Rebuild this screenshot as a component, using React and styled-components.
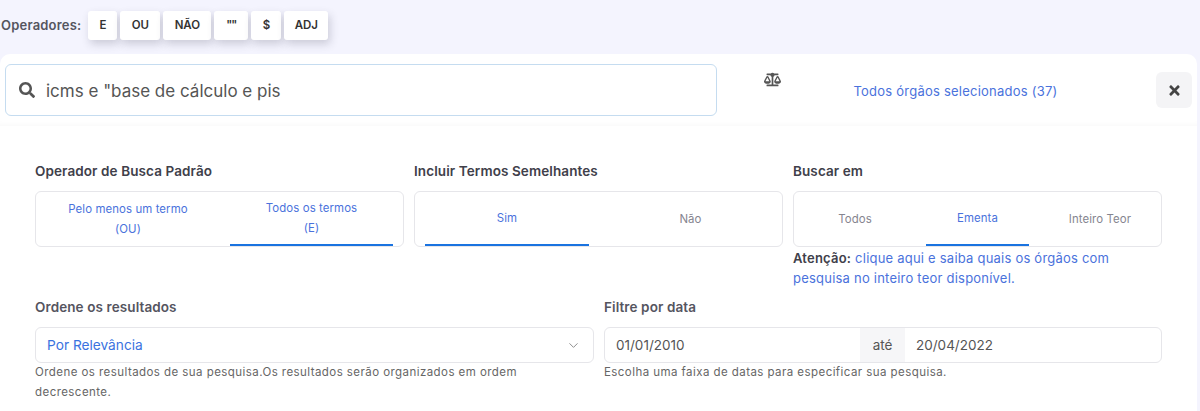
import styled, { createGlobalStyle } from 'styled-components'
import { FaSearch, FaBalanceScale, FaTimes } from 'react-icons/fa'
import { ChevronDown } from 'lucide-react'

const GlobalStyle = createGlobalStyle`
  html, body {
    margin: 0;
    padding: 0;
    height: 100%;
    overflow: hidden;
    background: #f4f4fe;
    font-family: Inter, "Liberation Sans", sans-serif;
  }
  * { box-sizing: border-box; }
`

const Toolbar = styled.div`
  display: flex;
  align-items: center;
  height: 54px;
  padding: 0 0 4px 1px;
`

const ToolbarLabel = styled.span`
  font-size: 13px;
  font-weight: 600;
  color: #55555f;
  letter-spacing: 0.2px;
  margin-right: 7px;
`

const OperatorButton = styled.button`
  width: ${(p) => p.$width}px;
  height: 29px;
  margin-right: 3px;
  padding: 0;
  border: 0;
  border-radius: 3px;
  background: #fff;
  color: #333;
  font: 600 11.5px Inter, sans-serif;
  letter-spacing: ${(p) => (p.$tight ? '-1px' : '0')};
  box-shadow: 2px 4px 8px rgba(60, 60, 80, 0.22);
`

const Card = styled.div`
  width: 1197px;
  height: 357px;
  background: #fff;
  border-radius: 10px 10px 0 0;
`

const SearchRow = styled.div`
  display: flex;
  align-items: center;
  height: 72px;
  padding: 0 5px;
  box-shadow: inset 0 -6px 5px -4px rgba(0, 0, 0, 0.025);
`

const SearchBox = styled.div`
  display: flex;
  align-items: center;
  gap: 11px;
  width: 712px;
  height: 52px;
  padding-left: 13px;
  border: 1px solid #c5dcf0;
  border-radius: 6px;
  color: #555;
  font-size: 17px;
`

const SearchText = styled.span`
  padding-top: 2px;
`

const ScaleWrap = styled.div`
  width: 110px;
  height: 52px;
  display: flex;
  justify-content: center;
  padding-top: 7px;
  color: #555;
  font-size: 17px;
`

const OrgansText = styled.div`
  flex: 1;
  text-align: center;
  font-size: 13px;
  color: #4a72dc;
  padding: 1px 72px 0 0;
  letter-spacing: 0.23px;
`

const CloseButton = styled.button`
  display: flex;
  align-items: center;
  justify-content: center;
  width: 36px;
  height: 36px;
  padding: 0;
  border: 0;
  border-radius: 6px;
  background: #f4f4f6;
  color: #444;
  font-size: 15px;
`

const Body = styled.div`
  padding: 35px 35px 0;
  width: 1197px;
`

const ThreeColumns = styled.div`
  display: grid;
  grid-template-columns: repeat(3, 369px);
  gap: 10px;
`

const TwoColumns = styled.div`
  display: grid;
  grid-template-columns: 559px 558px;
  gap: 10px;
  margin-top: 9px;
`

const Label = styled.div`
  font-size: 13.5px;
  line-height: 20px;
  font-weight: 600;
  color: ${(p) => (p.$muted ? '#55555f' : '#40404a')};
  letter-spacing: 0.1px;
  margin-bottom: 10px;
`

const Tabs = styled.div`
  display: flex;
  height: 56px;
  padding: 0 ${(p) => p.$right || 0}px 0 ${(p) => p.$left || 0}px;
  border: 1px solid #e6e6ea;
  border-radius: 6px;
`

const Tab = styled.div`
  width: ${(p) => p.$width}px;
  display: flex;
  align-items: center;
  justify-content: center;
  padding-top: 2px;
  padding-left: ${(p) => p.$padLeft || 0}px;
  padding-right: ${(p) => p.$padRight || 0}px;
  padding-bottom: ${(p) => (p.$active ? 2 : 0)}px;
  text-align: center;
  font-size: 11.4px;
  line-height: 20px;
  color: ${(p) => (p.$blue || p.$active ? '#4a72dc' : '#85858f')};
  border-bottom: 2px solid ${(p) => (p.$active ? '#1a73e0' : 'transparent')};
  letter-spacing: 0.1px;
`

const Notice = styled.div`
  max-width: 325px;
  font-size: 13px;
  line-height: 20px;
  color: #4a72dc;
  margin-top: 1px;
  letter-spacing: 0.22px;
`

const NoticeStrong = styled.strong`
  font-weight: 600;
  color: #40404a;
`

const SelectBox = styled.div`
  display: flex;
  align-items: center;
  justify-content: space-between;
  height: 36px;
  padding: 0 12px 0 11px;
  border: 1px solid #e6e6ea;
  border-radius: 6px;
  font-size: 13.7px;
  color: #3a72e0;
`

const DateGroup = styled.div`
  display: flex;
  height: 36px;
  border: 1px solid #e6e6ea;
  border-radius: 6px;
  overflow: hidden;
  font-size: 13.5px;
  color: #555;
`

const DateField = styled.div`
  flex: ${(p) => (p.$grow ? 1 : 'none')};
  width: ${(p) => (p.$grow ? 'auto' : '255px')};
  display: flex;
  align-items: center;
  padding-left: 11px;
`

const DateSeparator = styled.div`
  width: 45px;
  display: flex;
  align-items: center;
  justify-content: center;
  background: #f6f6f8;
`

const Help = styled.div`
  max-width: 500px;
  font-size: 11.5px;
  line-height: 20px;
  color: #666;
  margin-top: -1px;
  letter-spacing: 0.44px;
`

const operators = [
  ['E', 29],
  ['OU', 40],
  ['NÃO', 48],
  ['""', 34],
  ['$', 30],
  ['ADJ', 44],
]

export default function App() {
  return (
    <>
      <GlobalStyle />
      <Toolbar>
        <ToolbarLabel>Operadores:</ToolbarLabel>
        {operators.map(([text, width]) => (
          <OperatorButton key={text} $width={width} $tight={text === '""'}>{text}</OperatorButton>
        ))}
      </Toolbar>
      <Card>
        <SearchRow>
          <SearchBox>
            <FaSearch size={16} />
            <SearchText>icms e "base de cálculo e pis</SearchText>
          </SearchBox>
          <ScaleWrap><FaBalanceScale /></ScaleWrap>
          <OrgansText>Todos órgãos selecionados (37)</OrgansText>
          <CloseButton><FaTimes /></CloseButton>
        </SearchRow>
        <Body>
          <ThreeColumns>
            <div>
              <Label>Operador de Busca Padrão</Label>
              <Tabs $right={10}>
                <Tab $blue $width={194} $padRight={10}><span>Pelo menos um termo<br />(OU)</span></Tab>
                <Tab $active $width={163}><span>Todos os termos<br />(E)</span></Tab>
              </Tabs>
            </div>
            <div>
              <Label>Incluir Termos Semelhantes</Label>
              <Tabs $left={10} $right={10}>
                <Tab $active $width={164}>Sim</Tab>
                <Tab $width={183} $padLeft={20}>Não</Tab>
              </Tabs>
            </div>
            <div>
              <Label>Buscar em</Label>
              <Tabs>
                <Tab $width={132} $padRight={10}>Todos</Tab>
                <Tab $active $width={103}>Ementa</Tab>
                <Tab $width={132} $padLeft={10}>Inteiro Teor</Tab>
              </Tabs>
              <Notice>
                <NoticeStrong>Atenção:</NoticeStrong> clique aqui e saiba quais os órgãos com pesquisa no inteiro teor disponível.
              </Notice>
            </div>
          </ThreeColumns>
          <TwoColumns>
            <div>
              <Label $muted>Ordene os resultados</Label>
              <SelectBox>
                Por Relevância
                <ChevronDown size={15} color="#888" strokeWidth={1.5} />
              </SelectBox>
              <Help>Ordene os resultados de sua pesquisa.Os resultados serão organizados em ordem decrescente.</Help>
            </div>
            <div>
              <Label $muted>Filtre por data</Label>
              <DateGroup>
                <DateField>01/01/2010</DateField>
                <DateSeparator>até</DateSeparator>
                <DateField $grow>20/04/2022</DateField>
              </DateGroup>
              <Help>Escolha uma faixa de datas para especificar sua pesquisa.</Help>
            </div>
          </TwoColumns>
        </Body>
      </Card>
    </>
  )
}
